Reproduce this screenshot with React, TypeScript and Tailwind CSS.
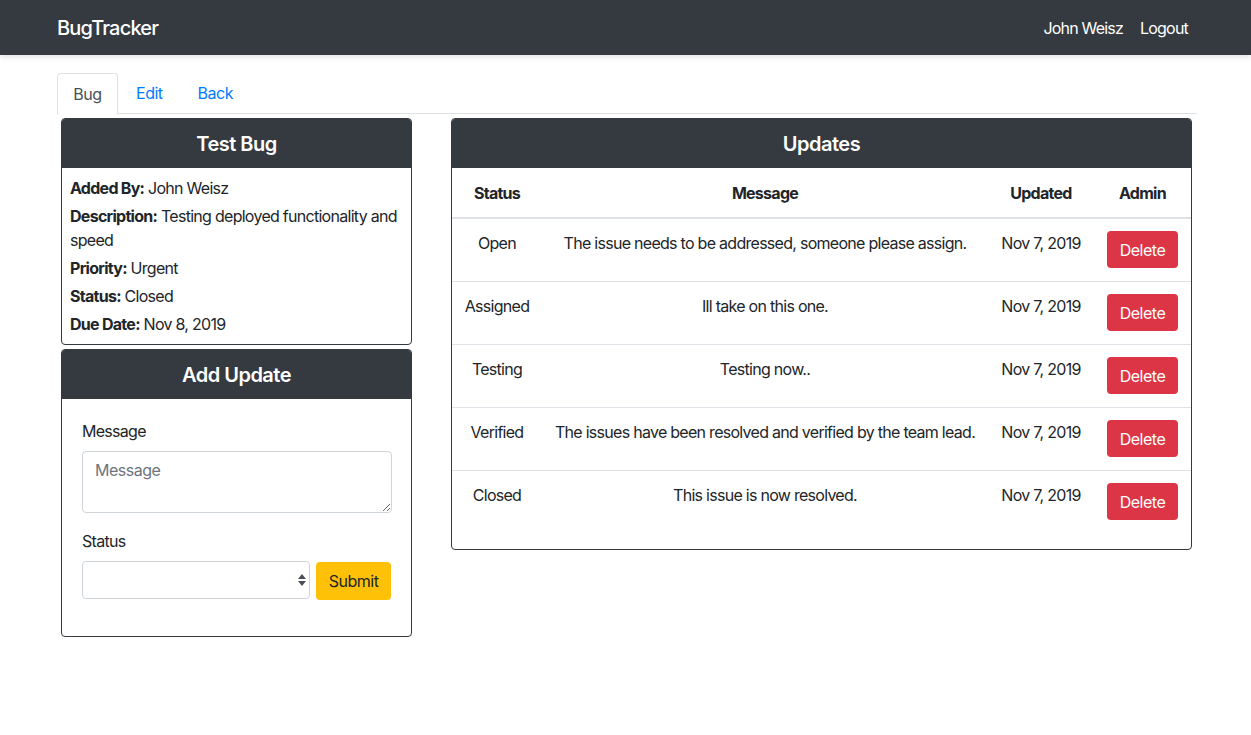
import React from "react";

const updates = [
  { status: "Open", message: "The issue needs to be addressed, someone please assign.", date: "Nov 7, 2019" },
  { status: "Assigned", message: "Ill take on this one.", date: "Nov 7, 2019" },
  { status: "Testing", message: "Testing now..", date: "Nov 7, 2019" },
  { status: "Verified", message: "The issues have been resolved and verified by the team lead.", date: "Nov 7, 2019" },
  { status: "Closed", message: "This issue is now resolved.", date: "Nov 7, 2019" },
];

function CardHeader({ title }: { title: string }) {
  return (
    <div className="h-[49px] bg-[#343a40] flex items-center justify-center text-white text-[20px] font-semibold tracking-[-0.025em]">
      {title}
    </div>
  );
}

export default function App() {
  return (
    <div className="min-h-screen bg-white text-[#212529] text-[16px] leading-6 tracking-[-0.045em]" style={{ fontFamily: "Inter, 'Noto Sans', sans-serif" }}>
      {/* Navbar */}
      <nav className="h-[55px] bg-[#343a40] shadow-[0_2px_6px_rgba(0,0,0,0.12)] relative z-10">
        <div className="ml-[57px] w-[1131px] h-full flex items-center justify-between tracking-[-0.05em]">
          <span className="text-white text-[20px] font-medium">BugTracker</span>
          <div className="flex items-center gap-[17px] text-white">
            <span>John Weisz</span>
            <span>Logout</span>
          </div>
        </div>
      </nav>

      <div className="ml-[57px] w-[1140px] pt-[18px]">
        {/* Tabs */}
        <div className="flex border-b border-[#dee2e6] h-[41px] tracking-[-0.03em]">
          <div className="w-[61px] h-[42px] flex items-center justify-center border border-[#dee2e6] border-b-white rounded-t-[4px] bg-white text-[#495057]">
            Bug
          </div>
          <div className="pl-[18px] pr-[35px] flex items-center text-[#007bff]">Edit</div>
          <div className="flex items-center text-[#007bff]">Back</div>
        </div>

        <div className="flex gap-[39px] pl-[4px] pt-[4px]">
          {/* Left column */}
          <div className="w-[351px] flex flex-col gap-[4px]">
            <div className="border border-[#343a40] rounded-[4px] overflow-hidden">
              <CardHeader title="Test Bug" />
              <div className="px-2 py-2 flex flex-col gap-1">
                <p><span className="font-bold">Added By:</span> John Weisz</p>
                <p><span className="font-bold">Description:</span> Testing deployed functionality and speed</p>
                <p><span className="font-bold">Priority:</span> Urgent</p>
                <p><span className="font-bold">Status:</span> Closed</p>
                <p><span className="font-bold">Due Date:</span> Nov 8, 2019</p>
              </div>
            </div>

            <div className="border border-[#343a40] rounded-[4px] overflow-hidden">
              <CardHeader title="Add Update" />
              <div className="px-5 pt-5 pb-[36px]">
                <label className="block mb-2">Message</label>
                <textarea
                  placeholder="Message"
                  className="block w-[310px] h-[62px] border border-[#ced4da] rounded-[4px] px-3 py-[6px] placeholder-[#6c757d] outline-none tracking-[-0.03em]"
                />
                <label className="block mt-4 mb-2">Status</label>
                <div className="flex gap-[6px]">
                  <div className="w-[229px] h-[38px] border border-[#ced4da] rounded-[4px] flex items-center justify-end pr-[2px]">
                    <svg width="10" height="16" viewBox="0 0 10 16">
                      <path d="M5 2 L9 7 L1 7 Z" fill="#495057" />
                      <path d="M5 14 L9 9 L1 9 Z" fill="#495057" />
                    </svg>
                  </div>
                  <button className="w-[75px] h-[38px] rounded-[4px] bg-[#ffc107] text-[#212529] mt-[1px] tracking-[-0.03em]">Submit</button>
                </div>
              </div>
            </div>
          </div>

          {/* Right column */}
          <div className="w-[741px] self-start border border-[#343a40] rounded-[4px] overflow-hidden">
            <CardHeader title="Updates" />
            <table className="w-full mb-4 border-collapse">
              <thead>
                <tr className="border-b-2 border-[#dee2e6]">
                  <th className="w-[90px] px-1 pt-[13px] pb-3 text-center font-bold">Status</th>
                  <th className="w-[446px] px-1 pt-[13px] pb-3 text-center font-bold">Message</th>
                  <th className="w-[106px] px-1 pt-[13px] pb-3 text-center font-bold">Updated</th>
                  <th className="px-1 pt-[13px] pb-3 text-center font-bold">Admin</th>
                </tr>
              </thead>
              <tbody>
                {updates.map((u, i) => (
                  <tr key={u.status} className={i < updates.length - 1 ? "border-b border-[#dee2e6]" : ""}>
                    <td className="px-1 pt-[12px] pb-3 text-center align-top">{u.status}</td>
                    <td className="px-1 pt-[12px] pb-3 text-center align-top whitespace-nowrap">{u.message}</td>
                    <td className="px-1 pt-[12px] pb-3 text-center align-top">{u.date}</td>
                    <td className="px-1 pt-[12px] pb-[13px] text-center align-top">
                      <button className="h-[37px] w-[71px] rounded-[4px] bg-[#dc3545] text-white tracking-[-0.03em]">Delete</button>
                    </td>
                  </tr>
                ))}
              </tbody>
            </table>
          </div>
        </div>
      </div>
    </div>
  );
}
